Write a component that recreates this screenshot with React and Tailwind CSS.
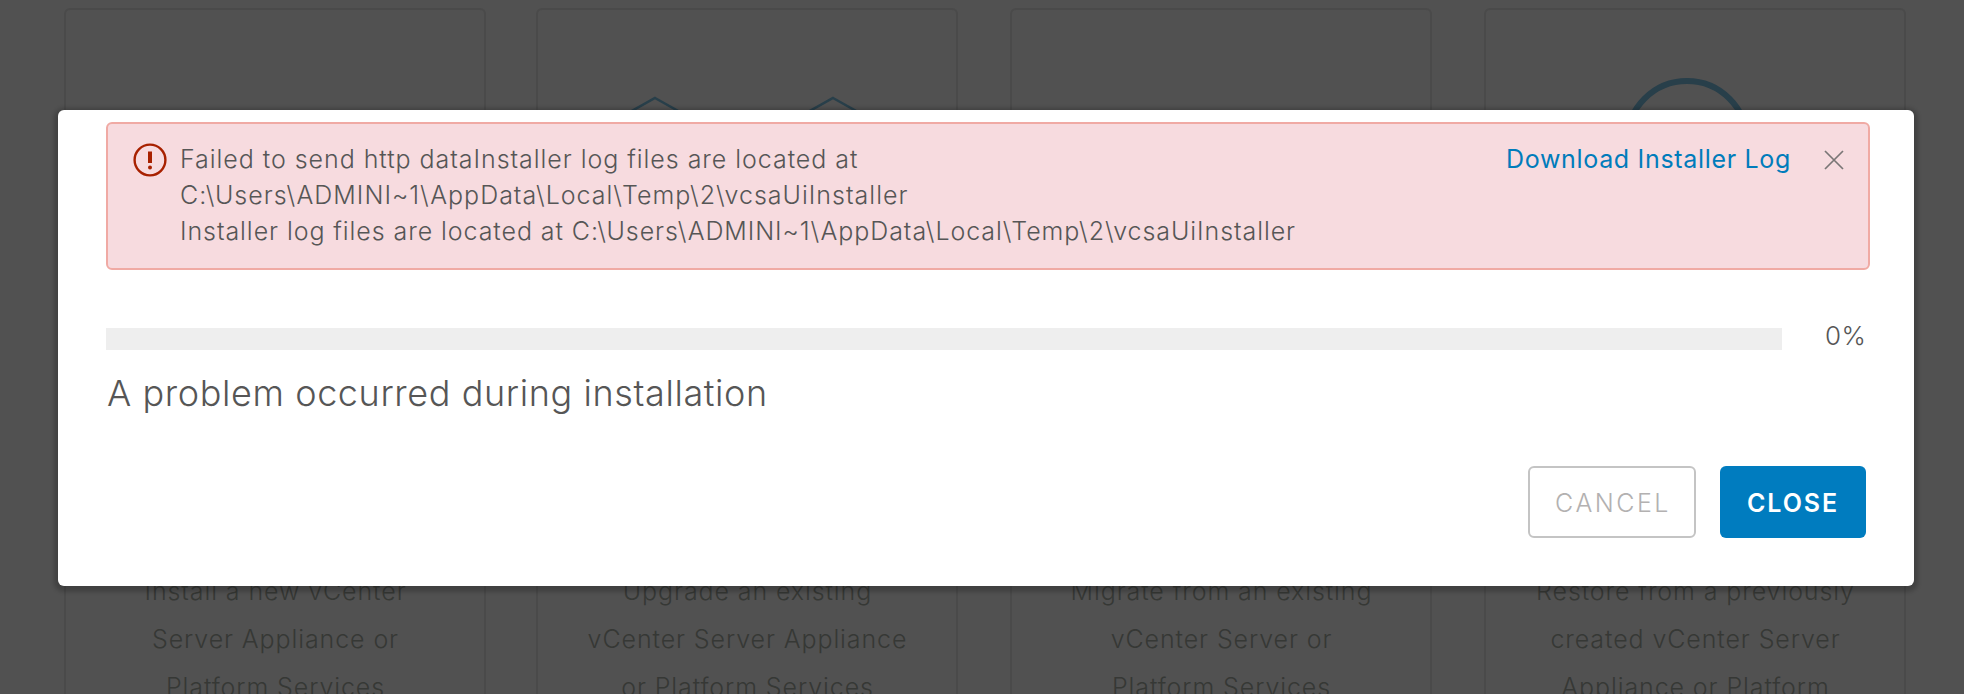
const cards = [
  { icon: "none", lines: ["Install a new vCenter", "Server Appliance or", "Platform Services"] },
  { icon: "hex", lines: ["Upgrade an existing", "vCenter Server Appliance", "or Platform Services"] },
  { icon: "none", lines: ["Migrate from an existing", "vCenter Server or", "Platform Services"] },
  { icon: "ring", lines: ["Restore from a previously", "created vCenter Server", "Appliance or Platform"] },
];

function CardIcon({ kind }) {
  return (
    <svg viewBox="0 0 418 200" className="h-[200px] w-full shrink-0" fill="none" stroke="#283f4a">
      {kind === "hex" && (
        <g strokeWidth="2.5">
          <path d="M117 88 L158 111 V158 L117 181 L76 158 V111 Z" />
          <path d="M295 88 L336 111 V158 L295 181 L254 158 V111 Z" />
        </g>
      )}
      {kind === "ring" && <circle cx="201" cy="131" r="60" strokeWidth="6" />}
    </svg>
  );
}

function Card({ icon, lines }) {
  return (
    <div className="flex h-[760px] w-[422px] flex-col rounded-[6px] border-2 border-[#4a4a4a]">
      <CardIcon kind={icon} />
      <div className="mt-[357px] pl-px text-center text-[25px] leading-[48px] font-light tracking-[0.9px] text-[#363835]">
        {lines.map((line) => (
          <p key={line}>{line}</p>
        ))}
      </div>
    </div>
  );
}

export default function App() {
  return (
    <div className="relative h-[694px] w-[1964px] overflow-hidden bg-[#515151] font-['Inter',sans-serif]">
      <div className="grid grid-cols-[472px_474px_474px_422px] pt-2 pl-16">
        {cards.map((card) => (
          <Card key={card.lines.join(" ")} {...card} />
        ))}
      </div>

      <div className="absolute inset-0 flex items-start pt-[110px] pl-[58px]">
        <div className="flex h-[476px] w-[1856px] flex-col rounded-[6px] bg-white pt-3 pr-11 pl-12 shadow-[0_2px_4px_4px_rgba(0,0,0,0.2)]">
          <div className="flex h-[148px] shrink-0 items-start rounded-[6px] border-2 border-[#f0aaa4] bg-[#f7dbdf] pt-[17px] pr-[24px] pl-[24px] text-[25px] leading-9 font-light text-[#565656]">
            <svg viewBox="0 0 36 36" className="mt-px h-9 w-9 shrink-0" fill="none" stroke="#a82100">
              <circle cx="18" cy="18" r="15.4" strokeWidth="2.4" />
              <path d="M18 9.5 V21" strokeWidth="4" />
              <circle cx="18" cy="25.4" r="2" fill="#a82100" stroke="none" />
            </svg>
            <div className="ml-3 flex-1 whitespace-nowrap">
              <p className="tracking-[0.95px]">Failed to send http dataInstaller log files are located at</p>
              <p className="tracking-[1px]">{"C:\\Users\\ADMINI~1\\AppData\\Local\\Temp\\2\\vcsaUiInstaller"}</p>
              <p className="tracking-[0.92px]">
                {"Installer log files are located at C:\\Users\\ADMINI~1\\AppData\\Local\\Temp\\2\\vcsaUiInstaller"}
              </p>
            </div>
            <a className="font-normal tracking-[0.68px] text-[#007cbb]">Download Installer Log</a>
            <svg viewBox="0 0 20 20" className="mt-[9px] ml-[33px] h-5 w-5 shrink-0" fill="none" stroke="#7a7676" strokeWidth="1.7">
              <path d="M1 1 L19 19 M19 1 L1 19" />
            </svg>
          </div>

          <div className="mt-[48px] flex h-[42px] shrink-0 items-start">
            <div className="mt-[10px] h-[22px] w-[1676px] bg-[#eeeeee]" />
            <span className="ml-[43px] text-[26px] leading-9 font-light tracking-[0.5px] text-[#565656]">0%</span>
          </div>

          <h2 className="mt-[9px] pl-px text-[36px] leading-[48px] font-light tracking-[0.6px] text-[#565656]">
            A problem occurred during installation
          </h2>

          <div className="mt-[49px] mr-1 flex justify-end gap-6 text-[25px]">
            <button className="h-[72px] w-[168px] rounded-[6px] border-2 border-[#c4c4c4] pt-[3px] pl-[2px] font-light tracking-[2.5px] text-[#b3b1b1]">
              CANCEL
            </button>
            <button className="h-[72px] w-[146px] rounded-[6px] bg-[#007cbf] pt-[3px] font-semibold tracking-[1.9px] text-white">
              CLOSE
            </button>
          </div>
        </div>
      </div>
    </div>
  );
}
